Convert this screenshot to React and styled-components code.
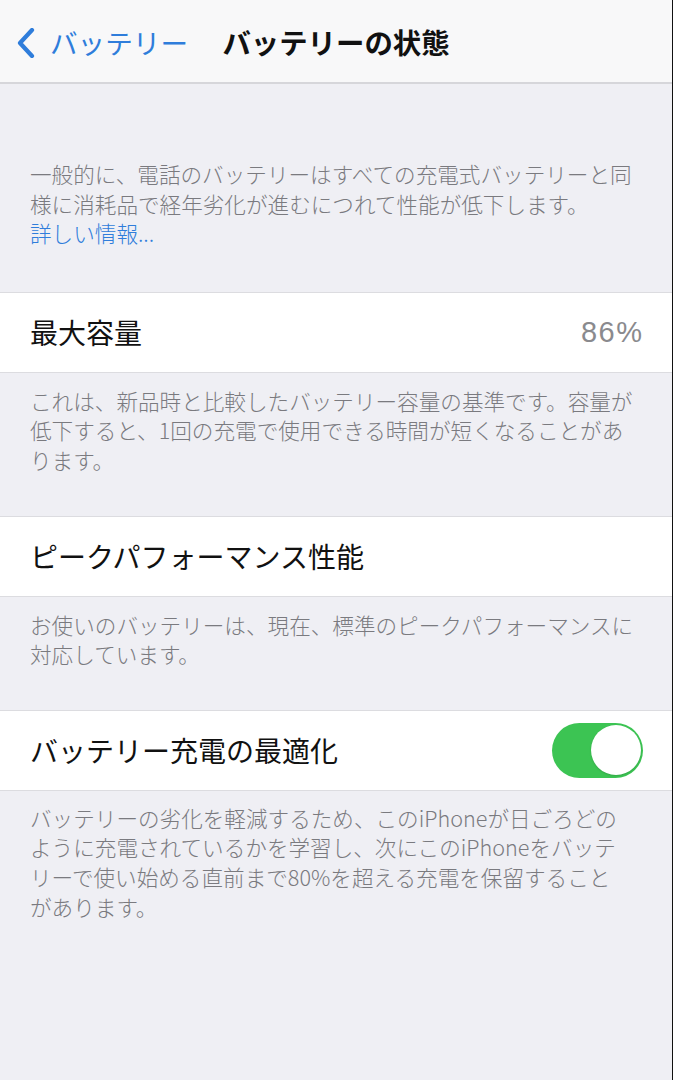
import React from "react";
import styled, { createGlobalStyle } from "styled-components";

const Global = createGlobalStyle`
  html, body { margin: 0; padding: 0; background: #efeff4; }
  body { font-family: "Noto Sans CJK JP", "Noto Sans", sans-serif; -webkit-font-smoothing: antialiased; }
`;

const Page = styled.div`
  width: 672px;
  min-height: 1080px;
  background: #efeff4;
  border-right: 1px solid #111;
  display: flex;
  flex-direction: column;
`;

const NavBar = styled.header`
  box-sizing: border-box;
  height: 84px;
  background: #f8f8f9;
  border-bottom: 2px solid #d6d6da;
  display: grid;
  grid-template-columns: 1fr auto 1fr;
  align-items: center;
`;

const Back = styled.div`
  display: flex;
  align-items: center;
  gap: 13px;
  padding-left: 15px;
  color: #2f7ddb;
  font-size: 27.6px;
  line-height: 1;
  padding-top: 3px;
`;

const Title = styled.h1`
  margin: 0;
  font-size: 28.4px;
  font-weight: 700;
  color: #111;
  line-height: 1;
  padding-top: 3px;
`;

const Note = styled.p`
  margin: 0;
  padding: ${(p) => p.$top}px 30px ${(p) => p.$bottom}px 30px;
  font-size: 21.6px;
  font-weight: 300;
  line-height: 29.6px;
  color: #7a7a7f;
  white-space: nowrap;
`;

const Link = styled.span`
  color: #2f7ddb;
`;

const Row = styled.div`
  height: 79px;
  background: #fff;
  border-top: 1px solid #dcdce0;
  border-bottom: 1px solid #dcdce0;
  display: flex;
  align-items: center;
  justify-content: space-between;
  padding: 0 30px;
`;

const Label = styled.span`
  font-size: 28px;
  color: #111;
  line-height: 1;
`;

const Value = styled.span`
  font-family: "Liberation Sans", Arial, sans-serif;
  font-size: 29px;
  letter-spacing: 1.5px;
  margin-right: -1.5px;
  color: #8a8a8e;
  line-height: 1;
`;

const Toggle = styled.div`
  width: 91px;
  height: 55px;
  border-radius: 28px;
  background: #3cc453;
  position: relative;
  flex-shrink: 0;
  margin-right: -1px;
`;

const Knob = styled.div`
  position: absolute;
  top: 2.5px;
  right: 2px;
  width: 50px;
  height: 50px;
  border-radius: 50%;
  background: #fff;
  box-shadow: 0 1px 2px rgba(0, 0, 0, 0.15);
`;

const Chevron = () => (
  <svg width="22" height="30" viewBox="0 0 22 30">
    <path d="M17 2 L5 15 L17 28" fill="none" stroke="#2f7ddb" strokeWidth="4.2" strokeLinecap="round" strokeLinejoin="round" />
  </svg>
);

export default function App() {
  return (
    <Page>
      <Global />
      <NavBar>
        <Back>
          <Chevron />
          <span>バッテリー</span>
        </Back>
        <Title>バッテリーの状態</Title>
        <div />
      </NavBar>
      <Note $top={75} $bottom={44}>
        一般的に、電話のバッテリーはすべての充電式バッテリーと同
        <br />
        様に消耗品で経年劣化が進むにつれて性能が低下します。
        <br />
        <Link>詳しい情報...</Link>
      </Note>
      <Row>
        <Label>最大容量</Label>
        <Value>86%</Value>
      </Row>
      <Note $top={13} $bottom={41}>
        これは、新品時と比較したバッテリー容量の基準です。容量が
        <br />
        低下すると、1回の充電で使用できる時間が短くなることがあ
        <br />
        ります。
      </Note>
      <Row>
        <Label>ピークパフォーマンス性能</Label>
      </Row>
      <Note $top={13} $bottom={41}>
        お使いのバッテリーは、現在、標準のピークパフォーマンスに
        <br />
        対応しています。
      </Note>
      <Row>
        <Label>バッテリー充電の最適化</Label>
        <Toggle>
          <Knob />
        </Toggle>
      </Row>
      <Note $top={12} $bottom={40}>
        バッテリーの劣化を軽減するため、このiPhoneが日ごろどの
        <br />
        ように充電されているかを学習し、次にこのiPhoneをバッテ
        <br />
        リーで使い始める直前まで80%を超える充電を保留すること
        <br />
        があります。
      </Note>
    </Page>
  );
}
